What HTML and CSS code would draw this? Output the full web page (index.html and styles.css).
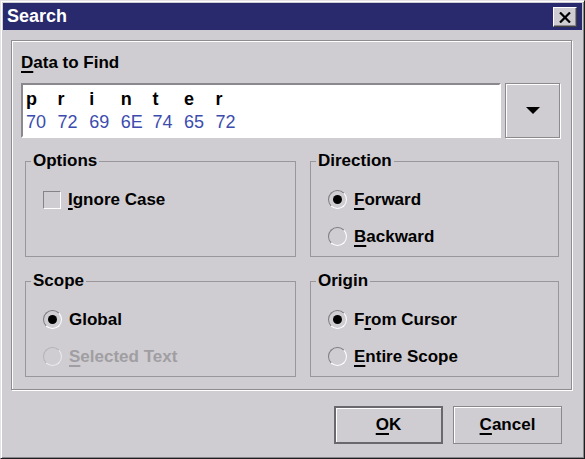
FILE: index.html
```html
<!DOCTYPE html>
<html lang="en">
<head>
  <meta charset="UTF-8" />
  <title>Search</title>
  <link rel="stylesheet" href="styles.css">
</head>
<body>

<div class="window">
  <div class="titlebar">
    <span class="title">Search</span>
    <button class="close" title="Close">
      <svg width="12" height="11" viewBox="0 0 12 11"><path d="M1 0.5 L11 10.5 M11 0.5 L1 10.5" stroke="#000" stroke-width="2.2" fill="none"/></svg>
    </button>
  </div>

  <div class="panel">
    <div class="caption"><u>D</u>ata to Find</div>
    <div class="find-row">
      <div class="field">
        <div class="cells chars">
          <span>p</span><span>r</span><span>i</span><span>n</span><span>t</span><span>e</span><span>r</span>
        </div>
        <div class="cells hex">
          <span>70</span><span>72</span><span>69</span><span>6E</span><span>74</span><span>65</span><span>72</span>
        </div>
      </div>
      <button class="drop">
        <svg width="14" height="7" viewBox="0 0 14 7"><path d="M0 0 H14 L7 7 Z" fill="#000"/></svg>
      </button>
    </div>

    <div class="groups">
      <fieldset class="group">
        <legend>Options</legend>
        <label class="item"><span class="check"></span><span><u>I</u>gnore Case</span></label>
      </fieldset>
      <fieldset class="group">
        <legend>Direction</legend>
        <label class="item"><span class="radio on"></span><span><u>F</u>orward</span></label>
        <label class="item"><span class="radio"></span><span><u>B</u>ackward</span></label>
      </fieldset>
      <fieldset class="group">
        <legend>Scope</legend>
        <label class="item"><span class="radio on"></span><span>Global</span></label>
        <label class="item disabled"><span class="radio"></span><span><u>S</u>elected Text</span></label>
      </fieldset>
      <fieldset class="group">
        <legend>Origin</legend>
        <label class="item"><span class="radio on"></span><span>F<u>r</u>om Cursor</span></label>
        <label class="item"><span class="radio"></span><span><u>E</u>ntire Scope</span></label>
      </fieldset>
    </div>
  </div>

  <div class="buttons">
    <button class="btn default"><u>O</u>K</button>
    <button class="btn"><u>C</u>ancel</button>
  </div>
</div>

</body>
</html>
```

FILE: styles.css
```css
body { margin: 0; font-family: 'Liberation Sans', Arial, sans-serif; font-size: 17px; font-weight: bold; color: #000; background: #cfcdd1; }
u { text-decoration-thickness: 2px; text-underline-offset: 3px; }
button { font-family: inherit; font-weight: bold; color: #000; cursor: default; }

.window { width: 585px; height: 459px; box-sizing: border-box; background: #cfcdd1; padding: 2px;
  border: 1px solid; border-color: #e4e2e6 #1e1e1e #1e1e1e #e4e2e6;
  box-shadow: inset 1px 1px #fff, inset -1px -1px #8a888c; }

.titlebar { height: 27px; background: #29296d; display: flex; align-items: center; justify-content: space-between; padding: 0 5px 0 4px; }
.title { color: #fff; font-size: 18px; line-height: 27px; }
.close { width: 24px; height: 20px; margin-top: 1px; padding: 0; display: flex; align-items: center; justify-content: center; background: #cfcdd1;
  border: 1px solid; border-color: #fff #404040 #404040 #fff; box-shadow: inset -1px -1px #8a888c; }

.panel { height: 350px; box-sizing: border-box; margin: 10px 10px 0 8px; padding: 12px 9px 0 9px;
  border: 1px solid #8e8c90; box-shadow: inset 1px 1px #fff, 1px 1px #fff; }
.caption { line-height: 20px; }

.find-row { display: flex; gap: 4px; margin-top: 10px; height: 55px; }
.field { width: 480px; height: 55px; box-sizing: border-box; background: #fff; padding: 3px 0 0 3px;
  border: 2px solid; border-color: #8a888c #fff #fff #8a888c; }
.cells { display: grid; grid-template-columns: repeat(7, 31.6px); font-size: 18px; line-height: 23px; }
.chars { font-weight: bold; color: #000; }
.hex { font-weight: normal; color: #3c4cae; }
.drop { width: 55px; height: 55px; padding: 0; display: flex; align-items: center; justify-content: center; background: #cfcdd1;
  border: 1px solid #8c8a8e; box-shadow: inset 1px 1px #fff, 1px 1px #fff; }

.groups { display: grid; grid-template-columns: 271px 249px; gap: 14px; margin: 13px 0 0 4px; }
.group { margin: 0; min-width: 0; height: 106px; box-sizing: border-box; padding: 10px 0 0 5px; border: 1px solid #99979b; }
.group legend { padding: 0 2px; line-height: 20px; }
.item { display: flex; align-items: center; gap: 7px; height: 37px; margin-left: 12px; }
.item.disabled { color: #a09ea2; }

.check { width: 18px; height: 18px; box-sizing: border-box; border: 1px solid; border-color: #858387 #fff #fff #858387; }
.radio { width: 19px; height: 19px; box-sizing: border-box; border-radius: 50%; position: relative;
  border: 1px solid; border-color: #7c7a7e #fff #fff #7c7a7e; }
.radio.on::after { content: ""; position: absolute; left: 4px; top: 4px; width: 9px; height: 9px; border-radius: 50%; background: #000; }
.disabled .radio { border-color: #b4b2b6 #eceaee #eceaee #b4b2b6; }

.buttons { display: flex; justify-content: flex-end; gap: 10px; margin-top: 16px; padding-right: 20px; }
.btn { width: 109px; height: 38px; font-size: 17px; background: #cfcdd1; padding: 0;
  border: 1px solid #8a888c; box-shadow: inset 1px 1px #fff; }
.btn.default { border: 2px solid #6a686c; }
```
